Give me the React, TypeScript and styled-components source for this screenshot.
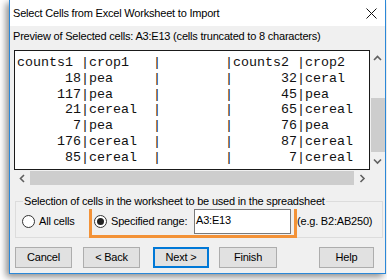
import React from "react";
import styled, { createGlobalStyle } from "styled-components";

const UI_FONT = `"Liberation Sans", Arial, sans-serif`;
const UI_SIZE = "11px";
const UI_SPACING = "-0.2px";

const Global = createGlobalStyle`
  html, body { margin: 0; padding: 0; background: #ffffff; overflow: hidden; }
  body { font-family: ${UI_FONT}; }
`;

const Stage = styled.div`
  width: 387px;
  height: 280px;
  padding-left: 9px;
  box-sizing: border-box;
  background: #ffffff;
`;

const Window = styled.div`
  width: 377px;
  height: 274px;
  box-sizing: border-box;
  border: 1px solid #2b88d8;
  border-top: none;
  background: #f0f0f0;
  box-shadow: -3px 3px 7px rgba(0, 0, 0, 0.45);
  display: flex;
  flex-direction: column;
  font-family: ${UI_FONT};
  font-size: ${UI_SIZE};
  letter-spacing: ${UI_SPACING};
  color: #000;
`;

const TitleBar = styled.div`
  height: 26px;
  flex: none;
  background: #ffffff;
  display: flex;
  align-items: center;
  padding: 0 8px 0 3px;
`;

const TitleText = styled.div`
  flex: 1;
  line-height: 15px;
`;

const Body = styled.div`
  flex: 1;
  display: flex;
  flex-direction: column;
`;

const Caption = styled.div`
  margin: 3px 0 0 3px;
  height: 15px;
  line-height: 15px;
`;

const PreviewGrid = styled.div`
  margin: 6px 0 0 4px;
  display: grid;
  grid-template-columns: 356px 15px;
  grid-template-rows: 120px 16px;
`;

const PreviewText = styled.div`
  box-sizing: border-box;
  border: 1px solid #1a1a1a;
  background: #ffffff;
  padding: 4px 0 0 2px;
  font-family: "Liberation Mono", "Courier New", monospace;
  font-size: 13.33px;
  letter-spacing: 0;
  line-height: 15.83px;
  white-space: pre;
  overflow: hidden;
  color: #111;
`;

const VScroll = styled.div`
  background: #f0f0f0;
  display: flex;
  flex-direction: column;
`;

const HScroll = styled.div`
  background: #f0f0f0;
  display: flex;
  align-items: stretch;
`;

const Corner = styled.div`
  background: #f0f0f0;
`;

const ArrowBtn = styled.div<{ $w?: number; $h?: number }>`
  flex: none;
  width: ${(p) => (p.$w ? `${p.$w}px` : "auto")};
  height: ${(p) => (p.$h ? `${p.$h}px` : "auto")};
  display: flex;
  align-items: center;
  justify-content: center;
`;

const VTrack = styled.div`
  flex: 1;
  display: flex;
  flex-direction: column;
`;

const VThumb = styled.div`
  margin: 31px 0 0 1px;
  height: 54px;
  background: #cdcdcd;
`;

const HThumb = styled.div`
  flex: 1;
  margin: 1px 0;
  background: #cdcdcd;
`;

const GroupBox = styled.div`
  position: relative;
  margin: 15px 0 0 5px;
  width: 368px;
  height: 37px;
  box-sizing: border-box;
  border: 1px solid #dcdcdc;
  padding: 2px 0 0 6px;
`;

const Legend = styled.span`
  position: absolute;
  top: -8px;
  left: 7px;
  padding: 0 1px;
  background: #f0f0f0;
  line-height: 15px;
  white-space: nowrap;
`;

const OptionRow = styled.div`
  height: 34px;
  display: flex;
  align-items: center;
`;

const Option = styled.label<{ $width?: number }>`
  display: flex;
  align-items: center;
  gap: 4px;
  width: ${(p) => (p.$width ? `${p.$width}px` : "auto")};
  flex: none;
  white-space: nowrap;
`;

const RadioCircle = styled.span<{ $checked?: boolean }>`
  width: 13px;
  height: 13px;
  box-sizing: border-box;
  border-radius: 50%;
  border: 1px solid #333;
  background: #fff;
  display: flex;
  align-items: center;
  justify-content: center;
  flex: none;
  &::after {
    content: "";
    display: ${(p) => (p.$checked ? "block" : "none")};
    width: 7px;
    height: 7px;
    border-radius: 50%;
    background: #222;
  }
`;

const Highlight = styled.div`
  width: 208px;
  height: 34px;
  box-sizing: border-box;
  border: 3px solid #f39237;
  display: flex;
  align-items: center;
  padding: 0 3px 0 2px;
  flex: none;
`;

const RangeInput = styled.div`
  margin-left: auto;
  width: 97px;
  height: 25px;
  box-sizing: border-box;
  border: 1px solid #7a7a7a;
  background: #fff;
  padding: 0 0 0 1px;
  line-height: 21px;
`;

const Hint = styled.span`
  margin-left: 0;
  white-space: nowrap;
`;

const ButtonRow = styled.div`
  margin-top: 9px;
  height: 21px;
  display: flex;
`;

const Button = styled.div<{ $ml: number; $w: number; $default?: boolean }>`
  margin-left: ${(p) => p.$ml}px;
  width: ${(p) => p.$w}px;
  height: 21px;
  box-sizing: border-box;
  background: #e1e1e1;
  border: ${(p) => (p.$default ? "2px solid #0078d7" : "1px solid #adadad")};
  display: flex;
  align-items: center;
  justify-content: center;
  line-height: 15px;
`;

const Chevron = ({ dir }: { dir: "up" | "down" | "left" | "right" }) => {
  const pts = {
    up: "1,5 4.5,1.5 8,5",
    down: "1,1.5 4.5,5 8,1.5",
    left: "5,1 1.5,4.5 5,8",
    right: "1.5,1 5,4.5 1.5,8",
  }[dir];
  const vertical = dir === "up" || dir === "down";
  return (
    <svg width={vertical ? 9 : 7} height={vertical ? 7 : 9} viewBox={vertical ? "0 0 9 7" : "0 0 7 9"}>
      <polyline points={pts} fill="none" stroke="#606060" strokeWidth="1.6" />
    </svg>
  );
};

const CloseIcon = () => (
  <svg width="11" height="11" viewBox="0 0 11 11">
    <path d="M0.5 0.5 L10.5 10.5 M10.5 0.5 L0.5 10.5" stroke="#111" strokeWidth="1" fill="none" />
  </svg>
);

const rows = [
  "counts1 |crop1   |        |counts2 |crop2",
  "      18|pea     |        |      32|ceral",
  "     117|pea     |        |      45|pea",
  "      21|cereal  |        |      65|cereal",
  "       7|pea     |        |      76|pea",
  "     176|cereal  |        |      87|cereal",
  "      85|cereal  |        |       7|cereal",
];

export default function App() {
  return (
    <>
      <Global />
      <Stage>
        <Window>
          <TitleBar>
            <TitleText>Select Cells from Excel Worksheet to Import</TitleText>
            <CloseIcon />
          </TitleBar>
          <Body>
            <Caption>Preview of Selected cells: A3:E13 (cells truncated to 8 characters)</Caption>
            <PreviewGrid>
              <PreviewText>{rows.join("\n")}</PreviewText>
              <VScroll>
                <ArrowBtn $h={17}>
                  <Chevron dir="up" />
                </ArrowBtn>
                <VTrack>
                  <VThumb />
                </VTrack>
                <ArrowBtn $h={17}>
                  <Chevron dir="down" />
                </ArrowBtn>
              </VScroll>
              <HScroll>
                <ArrowBtn $w={16}>
                  <Chevron dir="left" />
                </ArrowBtn>
                <HThumb />
                <ArrowBtn $w={16}>
                  <Chevron dir="right" />
                </ArrowBtn>
              </HScroll>
              <Corner />
            </PreviewGrid>
            <GroupBox>
              <Legend>Selection of cells in the worksheet to be used in the spreadsheet</Legend>
              <OptionRow>
                <Option $width={67}>
                  <RadioCircle />
                  All cells
                </Option>
                <Highlight>
                  <Option>
                    <RadioCircle $checked />
                    Specified range:
                  </Option>
                  <RangeInput>A3:E13</RangeInput>
                </Highlight>
                <Hint>(e.g. B2:AB250)</Hint>
              </OptionRow>
            </GroupBox>
            <ButtonRow>
              <Button $ml={5} $w={57}>Cancel</Button>
              <Button $ml={11} $w={57}>&lt; Back</Button>
              <Button $ml={13} $w={56} $default>Next &gt;</Button>
              <Button $ml={10} $w={58}>Finish</Button>
              <Button $ml={42} $w={55}>Help</Button>
            </ButtonRow>
          </Body>
        </Window>
      </Stage>
    </>
  );
}
